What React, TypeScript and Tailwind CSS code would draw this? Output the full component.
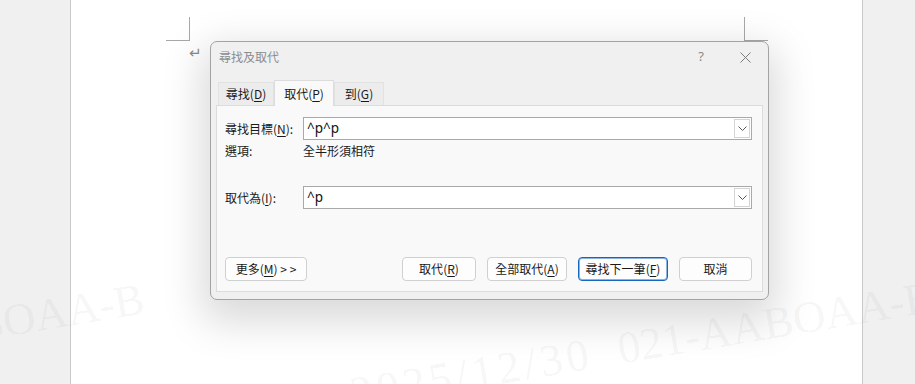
const ui = "font-['Noto_Sans_CJK_TC','Noto_Sans_CJK_JP',sans-serif]"

const Key = ({ k }: { k: string }) => (
  <>
    (<span className="underline underline-offset-2">{k}</span>)
  </>
)

const Chevron = () => (
  <svg width="9" height="5" viewBox="0 0 9 5" fill="none">
    <path d="M0.5 0.5 L4.5 4.5 L8.5 0.5" stroke="#5a5a5a" strokeWidth="1" />
  </svg>
)

const Combo = ({ value }: { value: string }) => (
  <div className="ml-[78px] flex h-full w-[449px] items-stretch border border-[#a9a9a9] bg-white">
    <div className="flex flex-1 items-center pl-[3px] font-['Noto_Sans',sans-serif] text-[13.5px] text-[#111]">
      {value}
    </div>
    <div className="my-[1px] mr-[1px] flex w-[16px] items-center justify-center border border-[#d4d4d4] bg-white">
      <Chevron />
    </div>
  </div>
)

const Btn = ({
  w,
  focus,
  children,
}: {
  w: string
  focus?: boolean
  children: React.ReactNode
}) => (
  <div
    className={`${w} flex h-full items-center justify-center rounded-[4px] border bg-[#fdfdfd] text-[12px] text-[#1a1a1a] ${
      focus ? "border-[#1466c0] shadow-[inset_0_0_0_1px_#8ab3e0]" : "border-[#d0d0d0]"
    }`}
  >
    {children}
  </div>
)

const Tab = ({
  active,
  w,
  children,
}: {
  active?: boolean
  w: string
  children: React.ReactNode
}) => (
  <div
    className={`${w} flex items-center justify-center border border-b-0 text-[12px] text-[#1a1a1a] ${
      active
        ? "relative z-10 -mb-px h-[26px] border-[#dcdcdc] bg-[#f9f9f9]"
        : "h-[23px] border-[#e2e2e2] bg-[#ececec]"
    }`}
  >
    {children}
  </div>
)

const Watermark = ({ className }: { className: string }) => (
  <span
    className={`pointer-events-none absolute flex origin-top-left -rotate-[9.5deg] whitespace-pre font-['Liberation_Serif',serif] text-[45px] leading-none text-black/[0.055] ${className}`}
  >
    <span className="tracking-[4px]">2025/12/30</span>
    <span className="ml-[26px]">021-AABOAA-B</span>
  </span>
)

export default function App() {
  return (
    <div className={`relative flex h-[384px] w-[915px] overflow-hidden bg-white ${ui}`}>
      <div className="w-[71px] border-r border-[#c9c9c9] bg-[#f0f0f0]" />
      <div className="relative w-[791px] bg-white">
        {/* crop marks */}
        <div className="absolute left-[95px] top-[17px] h-[24px] w-[24px] border-b border-r border-[#a8a8a8]" />
        <div className="absolute left-[673px] top-[17px] h-[24px] w-[24px] border-b border-l border-[#a8a8a8]" />
        <span className="absolute left-[118px] top-[42px] font-['DejaVu_Sans',sans-serif] text-[15px] text-[#8a8a8a]">↵</span>
      </div>
      <div className="flex-1 border-l border-[#c9c9c9] bg-[#f0f0f0]" />

      <Watermark className="left-[347px] top-[372px]" />
      <Watermark className="left-[-443px] top-[374px]" />

      {/* dialog */}
      <div className="absolute left-[210px] top-[41px] flex h-[259px] w-[559px] flex-col rounded-[7px] border border-[#a3a3a3] bg-[#f0f0f0] shadow-[0_14px_40px_8px_rgba(0,0,0,0.15)]">
        <div className="flex h-[30px] items-center pl-[8px] pr-[14px] text-[12px] text-[#8c8c8c]">
          <span>尋找及取代</span>
          <span className="ml-auto mr-[36px] font-['Noto_Sans',sans-serif] text-[13px] text-[#8a8a8a]">?</span>
          <svg width="11" height="11" viewBox="0 0 11 11" className="mr-[3px]">
            <path d="M0.5 0.5 L10.5 10.5 M10.5 0.5 L0.5 10.5" stroke="#7c7c7c" strokeWidth="1" />
          </svg>
        </div>

        <div className="mt-[8px] flex items-end pl-[7px]">
          <Tab w="w-[56px]">
            尋找<Key k="D" />
          </Tab>
          <Tab w="w-[60px]" active>
            取代<Key k="P" />
          </Tab>
          <Tab w="w-[50px]">
            到<Key k="G" />
          </Tab>
        </div>

        <div className="mx-[5px] flex h-[187px] flex-col border border-[#dcdcdc] bg-[#f9f9f9] px-[8px] pt-[11px] text-[12px] text-[#1a1a1a]">
          <div className="flex h-[23px] items-center">
            <span className="w-[0px] whitespace-nowrap">
              尋找目標<Key k="N" />:
            </span>
            <Combo value="^p^p" />
          </div>
          <div className="mt-[3px] flex h-[16px] items-center">
            <span className="w-[78px]">選項:</span>
            <span>全半形須相符</span>
          </div>
          <div className="mt-[27px] flex h-[23px] items-center">
            <span className="w-[0px] whitespace-nowrap">
              取代為<Key k="I" />:
            </span>
            <Combo value="^p" />
          </div>
          <div className="mt-[48px] flex h-[24px] items-center">
            <Btn w="w-[82px]">
              更多<Key k="M" />&nbsp;&gt;&nbsp;&gt;
            </Btn>
            <div className="ml-auto mr-[2px] flex h-full gap-[11px]">
              <Btn w="w-[74px]">
                取代<Key k="R" />
              </Btn>
              <Btn w="w-[80px]">
                全部取代<Key k="A" />
              </Btn>
              <Btn w="w-[90px]" focus>
                尋找下一筆<Key k="F" />
              </Btn>
              <Btn w="w-[73px]">取消</Btn>
            </div>
          </div>
        </div>
      </div>
    </div>
  )
}
